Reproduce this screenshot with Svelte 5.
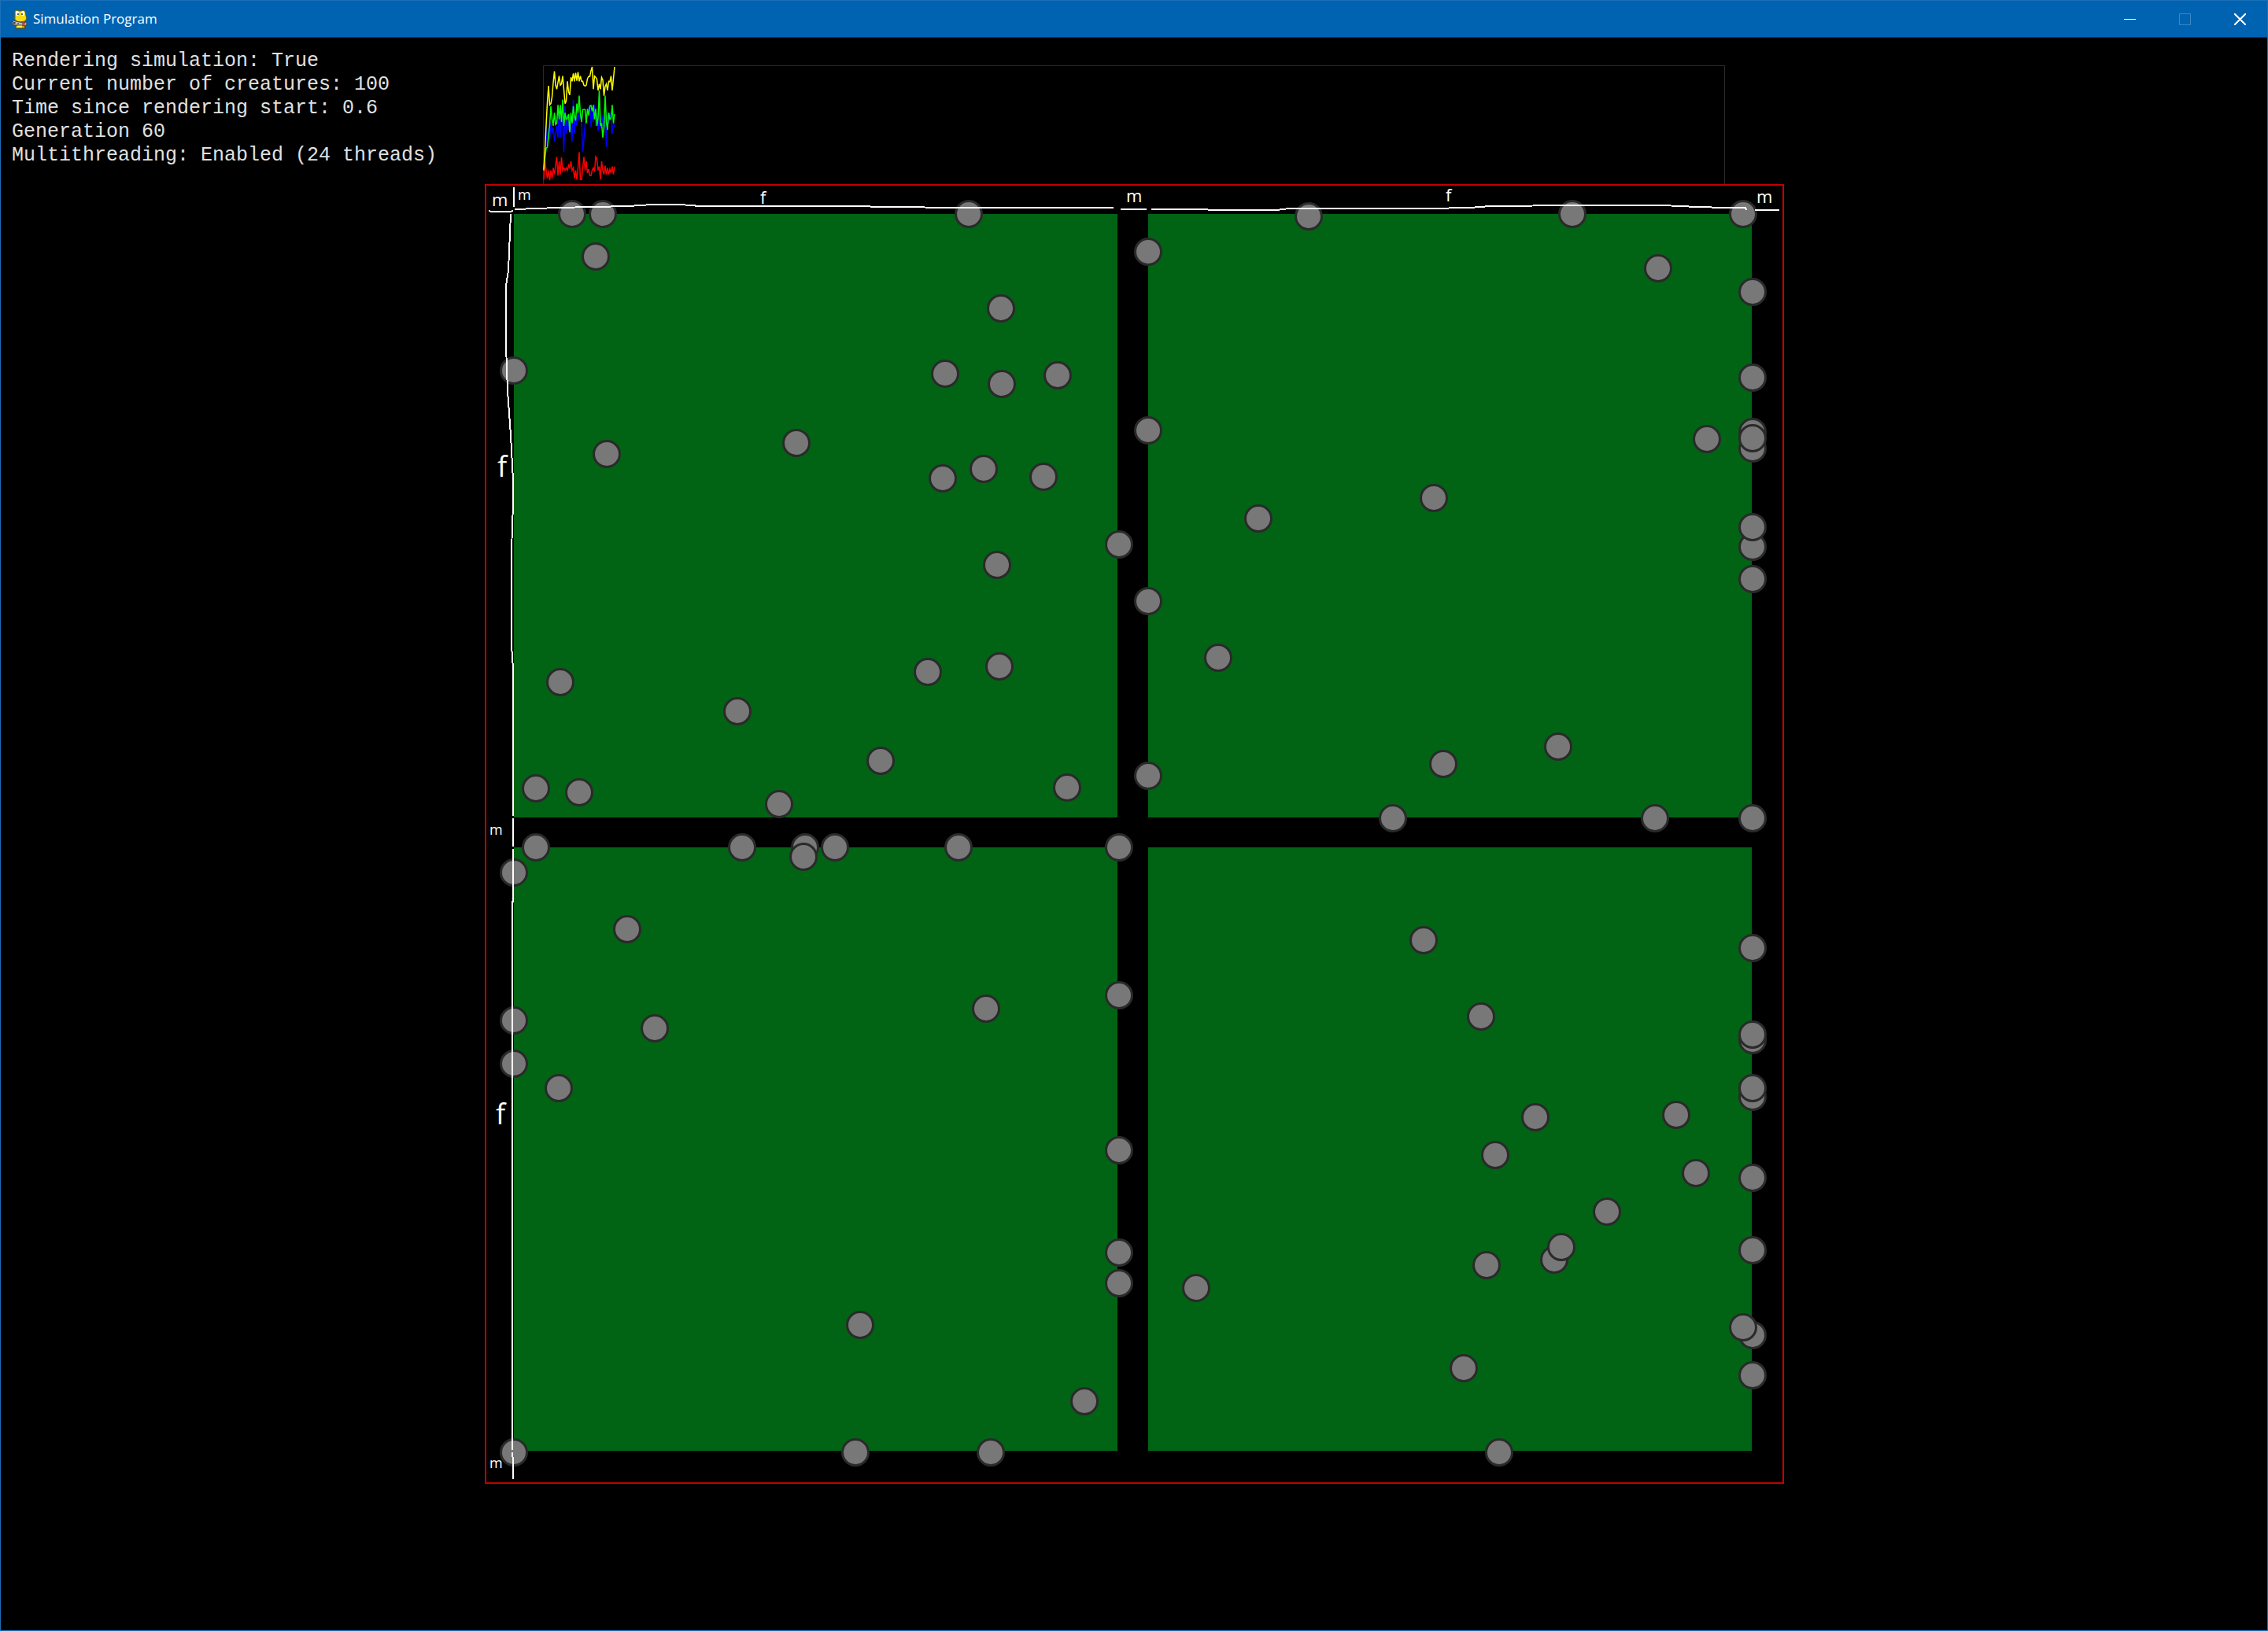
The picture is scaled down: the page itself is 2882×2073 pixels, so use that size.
<script>
  const stats = [
    'Rendering simulation: True',
    'Current number of creatures: 100',
    'Time since rendering start: 0.6',
    'Generation 60',
    'Multithreading: Enabled (24 threads)'
  ];

  // One sample per generation, in thirds of a pixel below the chart's top edge.
  const history = [
    {
      color: '#0000ff',
      values: [400, 355, 240, 320, 250, 290, 225, 270, 245, 300, 270, 240, 285, 190, 285, 200, 235, 340, 165, 270, 200, 255, 215, 250, 300, 140, 270, 200, 240, 185, 220, 190, 225, 340, 290, 235, 215, 190, 175, 160, 245, 185, 225, 160, 240, 190, 260, 200, 245, 195, 225, 260, 200, 320, 185, 230, 190, 210, 270, 230, 245]
    },
    {
      color: '#00ff00',
      values: [405, 360, 325, 322, 280, 235, 165, 215, 240, 190, 235, 230, 160, 215, 160, 225, 140, 240, 190, 215, 212, 195, 265, 190, 230, 165, 205, 220, 155, 190, 125, 195, 225, 178, 178, 178, 230, 175, 200, 165, 162, 185, 160, 215, 175, 240, 210, 105, 240, 230, 285, 245, 125, 225, 255, 190, 215, 210, 160, 230, 195]
    },
    {
      color: '#ff0000',
      values: [445, 375, 410, 440, 410, 448, 410, 440, 400, 425, 390, 358, 430, 375, 425, 360, 410, 400, 410, 400, 410, 390, 400, 375, 410, 400, 440, 410, 445, 400, 340, 445, 445, 400, 358, 410, 375, 420, 405, 430, 430, 410, 400, 415, 358, 365, 410, 395, 445, 375, 410, 425, 392, 425, 400, 425, 405, 420, 395, 425, 395]
    },
    {
      color: '#ffff00',
      values: [410, 325, 238, 150, 87, 160, 155, 130, 75, 32, 85, 100, 75, 50, 85, 80, 50, 100, 155, 145, 70, 110, 122, 55, 70, 40, 70, 38, 68, 35, 70, 50, 70, 70, 85, 88, 85, 60, 52, 52, 30, 15, 100, 50, 55, 62, 105, 80, 100, 55, 65, 125, 90, 80, 105, 70, 72, 50, 105, 60, 15]
    }
  ].map((series) => ({
    color: series.color,
    points: series.values.map((v, i) => `${i * 1.5 + 1},${v / 3 - 3}`).join(' ')
  }));

  const fields = [
    [653, 272],
    [1459, 272],
    [653, 1077],
    [1459, 1077]
  ];

  const creatures = [
    [727, 272], [766, 272], [1231, 272], [757, 326], [1272, 392], [653, 471], [1201, 475],
    [1273, 488], [1344, 477], [771, 577], [1012, 563], [1198, 608], [1250, 596], [1326, 606],
    [1663, 275], [1998, 272], [2215, 272], [1459, 320], [2107, 341], [2227, 371], [2227, 480],
    [1459, 547], [2169, 558], [1822, 633], [2227, 549], [2227, 570], [2227, 557], [2227, 695],
    [2227, 670], [2227, 736], [1980, 949], [2103, 1040], [2227, 1040], [1422, 692], [1267, 718],
    [1179, 854], [1270, 847], [712, 867], [937, 904], [1119, 967], [1459, 764], [1599, 659],
    [1548, 836], [1834, 971], [1459, 986], [1770, 1040], [681, 1002], [736, 1007], [990, 1022],
    [1356, 1001], [681, 1077], [943, 1077], [1023, 1077], [1021, 1089], [1061, 1077],
    [1218, 1077], [1422, 1077], [653, 1109], [797, 1181], [1253, 1282], [1422, 1265],
    [653, 1297], [832, 1307], [653, 1352], [710, 1383], [1422, 1462], [1422, 1592],
    [1422, 1631], [1093, 1684], [1378, 1781], [653, 1846], [1087, 1846], [1259, 1846],
    [1809, 1195], [1882, 1292], [1951, 1420], [1900, 1468], [1889, 1608], [1520, 1637],
    [1860, 1739], [1905, 1846], [2227, 1205], [2227, 1322], [2227, 1315], [2227, 1394],
    [2227, 1383], [2130, 1417], [2155, 1491], [2227, 1497], [2042, 1540], [2227, 1589],
    [1975, 1601], [1984, 1585], [2227, 1697], [2215, 1687], [2227, 1748]
  ];

  const rules = [
    '653,238 653,263',
    '621,268 625,269 648,269 652,268',
    '654,266 682,265 708,264 799,262 828,260 864,260 890,262 1071,262 1210,264 1415,264',
    '1424,266 1457,266',
    '1463,266 1534,266 1536,267 1622,267 1638,265 1814,265 1868,264 1893,262 2004,261 2112,261 2157,263 2192,264 2218,264 2219,267',
    '2230,267 2261,267',
    '649,272 646,344 643,363 643,440 645,497 649,553 652,610 652,640 650,700 650,820 652,850 652,1037',
    '652,1040 652,1076',
    '652,1079 652,1146 651,1146 651,1843',
    '651,1846 652,1858 652,1880'
  ];

  const labels = [
    { text: 'm', x: 625, y: 262, size: 'mid' },
    { text: 'm', x: 658, y: 254, size: 'small' },
    { text: 'f', x: 966, y: 259, size: 'mid' },
    { text: 'm', x: 1431, y: 257, size: 'mid' },
    { text: 'f', x: 1837, y: 256, size: 'mid' },
    { text: 'm', x: 2232, y: 258, size: 'mid' },
    { text: 'f', x: 632, y: 606, size: 'large' },
    { text: 'm', x: 622, y: 1061, size: 'small' },
    { text: 'f', x: 630, y: 1429, size: 'large' },
    { text: 'm', x: 622, y: 1866, size: 'small' }
  ];
</script>

<div class="window">
  <header class="titlebar">
    <svg class="logo" viewBox="0 0 20 25" aria-hidden="true">
      <path d="M5 20h11l1 4H4z" fill="#c9a800" stroke="#4d4310" />
      <path d="M7 20h6v3H7z" fill="#fff04a" />
      <path d="M4 2Q6 0 9 2L12 2Q16 0 17 3L18 8Q20 13 16 15Q11 17 6 15Q3 13 4 9Z" fill="#f6dd18" stroke="#6a6010" />
      <ellipse cx="7" cy="5" rx="2" ry="3" fill="#fff" />
      <ellipse cx="14" cy="5" rx="2" ry="3" fill="#fff" />
      <circle cx="8" cy="6" r="1" fill="#222" />
      <circle cx="13" cy="6" r="1" fill="#222" />
      <path d="M1 16Q2 13 5 15L15 17Q19 15 19 19Q17 22 14 20L4 20Q0 20 1 16Z" fill="#b9bcc0" stroke="#454545" />
      <path d="M3 16v3M2 17h3M8 17v2" stroke="#222" />
      <circle cx="15" cy="18" r="2" fill="#c8403a" />
    </svg>
    <h1>Simulation Program</h1>
    <div class="controls">
      <button aria-label="Minimize">
        <svg viewBox="0 0 15 15"><path d="M0 7.5h15" /></svg>
      </button>
      <button aria-label="Maximize" disabled>
        <svg viewBox="0 0 15 15"><path d="M.5 .5h14v14H.5z" /></svg>
      </button>
      <button class="close" aria-label="Close">
        <svg viewBox="0 0 15 15"><path d="M0 0L15 15M15 0L0 15" /></svg>
      </button>
    </div>
  </header>

  <main>
    <section class="stats" aria-label="Simulation status">
      {#each stats as line}
        <p>{line}</p>
      {/each}
    </section>

    <section class="arena" aria-label="Arena">
      <svg class="chart" viewBox="0 0 1503 151" role="img" aria-label="Population history">
        <path class="frame" d="M.5 151V.5H1502.5V151" />
        {#each history as series}
          <polyline points={series.points} stroke={series.color} />
        {/each}
      </svg>

      <svg class="world" viewBox="616 234 1651 1652" role="img" aria-label="Creatures in four fields">
        {#each fields as [x, y]}
          <rect class="field" {x} {y} width="767" height="767" />
        {/each}
        {#each creatures as [cx, cy]}
          <circle {cx} {cy} r="16.5" />
        {/each}
        {#each rules as points}
          <polyline {points} />
        {/each}
        {#each labels as label}
          <text class={label.size} x={label.x} y={label.y}>{label.text}</text>
        {/each}
        <rect class="bounds" x="617" y="235" width="1649" height="1650" />
      </svg>
    </section>
  </main>
</div>

<style>
  :global(body) {
    margin: 0;
    background: #000;
  }

  .window {
    box-sizing: border-box;
    display: flex;
    flex-direction: column;
    min-height: 100vh;
    border: 1px solid #1a6fb8;
    background: #000;
  }

  .titlebar {
    display: flex;
    align-items: center;
    height: 46px;
    padding-left: 14px;
    border-bottom: 1px solid #2b2b2b;
    background: #0063b1;
    color: #fff;
  }

  .logo {
    width: 20px;
    height: 25px;
  }

  h1 {
    flex: 1;
    margin: 0 0 0 7px;
    font: 400 17px/24px 'Open Sans', sans-serif;
  }

  .controls {
    display: flex;
    align-self: stretch;
  }

  button {
    display: grid;
    place-items: center;
    width: 70px;
    padding: 0;
    border: 0;
    background: none;
    color: #fff;
  }

  button:disabled {
    color: #3a86c6;
  }

  button svg {
    width: 15px;
    height: 15px;
    fill: none;
    stroke: currentColor;
    shape-rendering: crispEdges;
  }

  .close svg {
    stroke-width: 2px;
    shape-rendering: auto;
  }

  main {
    display: grid;
    grid-template-columns: 615fr 1651fr 614fr;
    align-items: start;
  }

  .stats {
    padding: 15px 0 0 14px;
    color: #e0e0e0;
    font: 25px/30px 'Liberation Mono', 'Courier New', monospace;
    white-space: nowrap;
  }

  .stats p {
    margin: 0;
  }

  .arena {
    grid-column: 2;
    display: flex;
    flex-direction: column;
    align-items: center;
    padding-top: 35px;
  }

  .chart {
    display: block;
    width: 91%;
    fill: none;
    stroke-width: 1.5px;
  }

  .frame {
    stroke: #2a2a2a;
    stroke-width: 1px;
    shape-rendering: crispEdges;
  }

  .world {
    display: block;
    width: 100%;
  }

  .field {
    fill: #006414;
  }

  .world circle {
    fill: #787878;
    stroke: #2a2a2a;
    stroke-width: 3px;
  }

  .world polyline {
    fill: none;
    stroke: #fff;
    stroke-width: 2px;
    shape-rendering: crispEdges;
  }

  .bounds {
    fill: none;
    stroke: #c40000;
    stroke-width: 2px;
    shape-rendering: crispEdges;
  }

  text {
    fill: #fff;
    font-family: 'Open Sans', sans-serif;
  }

  .small {
    font-size: 18px;
  }

  .mid {
    font-size: 22px;
  }

  .large {
    font-size: 36px;
  }
</style>
